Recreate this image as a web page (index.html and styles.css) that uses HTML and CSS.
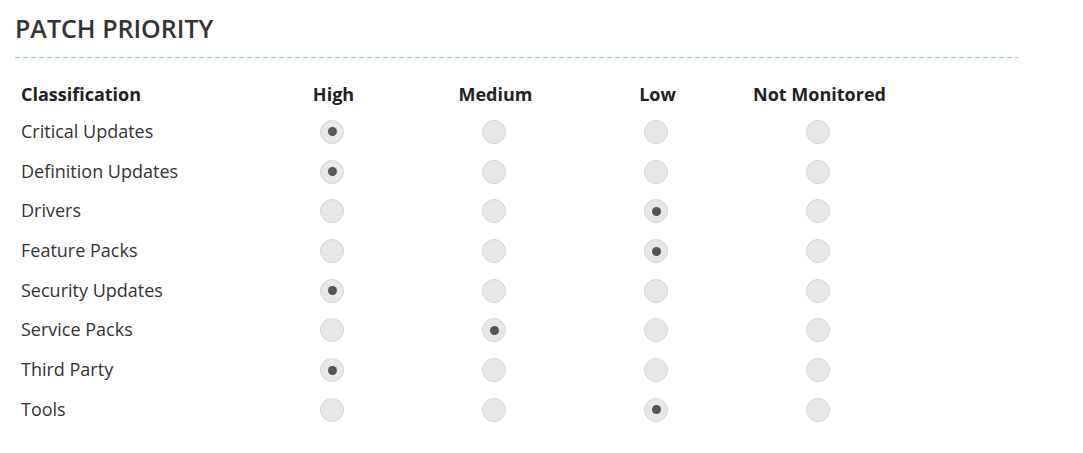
FILE: index.html
```
<!DOCTYPE html>
<html lang="en">
<head>
    <meta charset="UTF-8">
    <meta name="viewport" content="width=device-width, initial-scale=1.0">
    <title>Patch Priority</title>
    <link rel="stylesheet" href="styles.css">
</head>
<body>
    <div class="panel">
        <h2 class="panel-title">Patch Priority</h2>
        <div class="divider"></div>

        <table class="priority-table">
            <thead>
                <tr>
                    <th class="col-name">Classification</th>
                    <th>High</th>
                    <th>Medium</th>
                    <th>Low</th>
                    <th>Not Monitored</th>
                </tr>
            </thead>
            <tbody id="priorityRows"></tbody>
        </table>
    </div>

    <script>
        // 0 = high, 1 = medium, 2 = low, 3 = not monitored
        const rows = [
            ['Critical Updates', 0],
            ['Definition Updates', 0],
            ['Drivers', 2],
            ['Feature Packs', 2],
            ['Security Updates', 0],
            ['Service Packs', 1],
            ['Third Party', 0],
            ['Tools', 2]
        ];

        const tbody = document.getElementById('priorityRows');
        rows.forEach((row, i) => {
            const tr = document.createElement('tr');
            let html = `<td class="col-name">${row[0]}</td>`;
            for (let p = 0; p < 4; p++) {
                html += `<td><label class="radio"><input type="radio" name="prio${i}" value="${p}"${row[1] === p ? ' checked' : ''}><span></span></label></td>`;
            }
            tr.innerHTML = html;
            tbody.appendChild(tr);
        });
    </script>
</body>
</html>
```

FILE: styles.css
```
body {
    font-family: "Open Sans", Arial, sans-serif;
    background-color: #fff;
    color: #333;
    margin: 0;
    padding: 0;
}
.panel {
    padding: 11px 65px 0 15px;
}
.panel-title {
    margin: 0;
    font-size: 25px;
    font-weight: 600;
    line-height: 34px;
    text-transform: uppercase;
    color: #333;
}
.divider {
    height: 1px;
    margin-top: 12px;
    background: repeating-linear-gradient(to right, #8ecbda 0, #8ecbda 5px, transparent 5px, transparent 8px);
}
.priority-table {
    border-collapse: collapse;
    margin-top: 18px;
}
.priority-table th {
    font-size: 18px;
    font-weight: bold;
    color: #222;
    height: 35px;
    text-align: center;
    width: 159px;
    padding: 0 0 0 3px;
}
.priority-table td {
    font-size: 18px;
    color: #333;
    height: 39.7px;
    text-align: center;
    padding: 0;
}
.priority-table .col-name {
    text-align: left;
    width: 230px;
    padding-left: 6px;
}
.radio {
    display: inline-block;
    vertical-align: middle;
}
.radio input {
    display: none;
}
.radio span {
    display: block;
    width: 22px;
    height: 22px;
    border-radius: 50%;
    background-color: #e8e8e8;
    border: 1px solid #d6d6d6;
    position: relative;
}
.radio input:checked + span::after {
    content: "";
    position: absolute;
    left: 50%;
    top: 50%;
    width: 9px;
    height: 9px;
    margin: -4.5px 0 0 -4.5px;
    border-radius: 50%;
    background-color: #555;
}
```
